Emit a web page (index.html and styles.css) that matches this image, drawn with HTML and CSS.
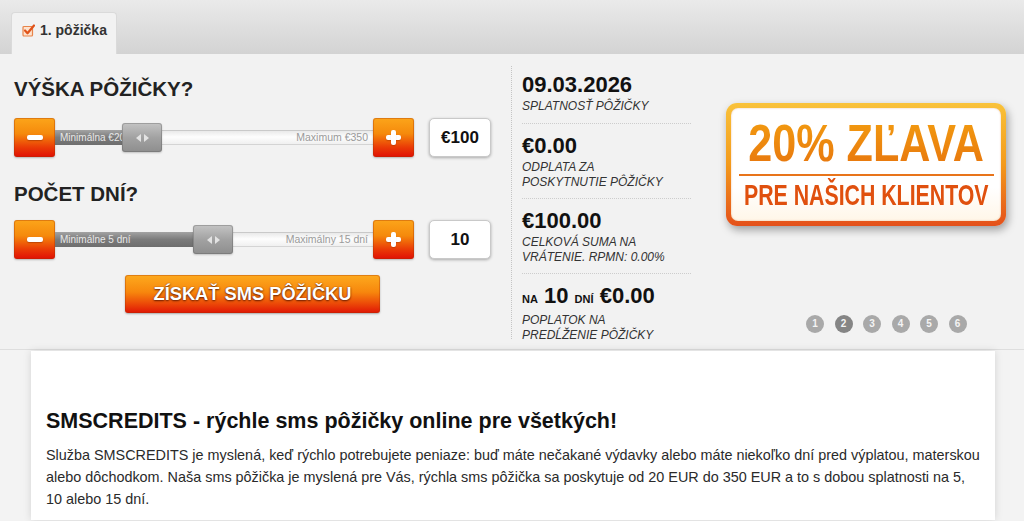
FILE: index.html
```html
<!DOCTYPE html>
<html lang="sk">
<head>
<meta charset="utf-8">
<title>SMSCREDITS</title>
<link rel="stylesheet" href="styles.css">
</head>
<body>
<div class="topbar">
  <div class="tab">
    <svg class="chk" width="13" height="13" viewBox="0 0 13 13"><rect x="1" y="2.5" width="9.5" height="9.5" rx="1" fill="#fde3cf" stroke="#e8844a" stroke-width="1.2"/><path d="M3 6.5 L5.5 9.3 L12 1.5" fill="none" stroke="#e0531a" stroke-width="2.2" stroke-linecap="round" stroke-linejoin="round"/></svg>
    <span>1. pôžička</span>
  </div>
</div>

<div class="panel">
  <div class="calc">
    <h2 class="q">VÝŠKA PÔŽIČKY?</h2>
    <div class="ctrl">
      <div class="sq"><span class="minus"></span></div>
      <div class="track">
        <div class="fill" style="width:90px">Minimálna €20</div>
        <span class="max">Maximum €350</span>
        <div class="thumb" style="left:67px"><i class="al"></i><i class="ar"></i></div>
      </div>
      <div class="sq"><span class="plus"></span></div>
      <div class="val">€100</div>
    </div>
    <h2 class="q q2">POČET DNÍ?</h2>
    <div class="ctrl">
      <div class="sq"><span class="minus"></span></div>
      <div class="track">
        <div class="fill" style="width:160px">Minimálne 5 dní</div>
        <span class="max">Maximálny 15 dní</span>
        <div class="thumb" style="left:138px"><i class="al"></i><i class="ar"></i></div>
      </div>
      <div class="sq"><span class="plus"></span></div>
      <div class="val">10</div>
    </div>
    <div class="cta-wrap"><div class="cta">ZÍSKAŤ SMS PÔŽIČKU</div></div>
  </div>

  <div class="summary">
    <div class="row first">
      <div class="big">09.03.2026</div>
      <div class="small">SPLATNOSŤ PÔŽIČKY</div>
    </div>
    <div class="row">
      <div class="big">€0.00</div>
      <div class="small">ODPLATA ZA<br>POSKYTNUTIE PÔŽIČKY</div>
    </div>
    <div class="row">
      <div class="big">€100.00</div>
      <div class="small">CELKOVÁ SUMA NA<br>VRÁTENIE. RPMN: 0.00%</div>
    </div>
    <div class="row last">
      <div class="big"><span class="tiny">NA</span> 10 <span class="tiny">DNÍ</span> €0.00</div>
      <div class="small">POPLATOK NA<br>PREDĹŽENIE PÔŽIČKY</div>
    </div>
  </div>

  <div class="promo">
    <div class="badge">
      <div class="badge-in">
        <div class="b1"><span>20% ZĽAVA</span></div>
        <div class="bline"></div>
        <div class="b2"><span>PRE NAŠICH KLIENTOV</span></div>
      </div>
    </div>
    <div class="dots">
      <span class="dot">1</span>
      <span class="dot on">2</span>
      <span class="dot">3</span>
      <span class="dot">4</span>
      <span class="dot">5</span>
      <span class="dot">6</span>
    </div>
  </div>
</div>

<div class="lower">
  <div class="card">
    <h1>SMSCREDITS - rýchle sms pôžičky online pre všetkých!</h1>
    <p>Služba SMSCREDITS je myslená, keď rýchlo potrebujete peniaze: buď máte nečakané výdavky alebo máte niekoľko dní pred výplatou, materskou alebo dôchodkom. Naša sms pôžička je myslená pre Vás, rýchla sms pôžička sa poskytuje od 20 EUR do 350 EUR a to s dobou splatnosti na 5, 10 alebo 15 dní.</p>
  </div>
</div>
</body>
</html>
```

FILE: styles.css
```css
* { box-sizing: border-box; }
html, body { margin: 0; padding: 0; }
body {
  font-family: "Liberation Sans", Arial, sans-serif;
  background: #f2f2f2;
  color: #222;
  width: 1024px;
  height: 521px;
  overflow: hidden;
}

/* top tab bar */
.topbar {
  height: 54px;
  background: linear-gradient(#eaeaea, #d3d3d3);
  padding-left: 11px;
  display: flex;
  align-items: flex-end;
}
.tab {
  width: 106px;
  height: 42px;
  background: #f2f2f2;
  border: 1px solid #dadada;
  border-bottom: none;
  border-radius: 4px 4px 0 0;
  padding: 9px 0 0 10px;
  display: flex;
  align-items: flex-start;
  gap: 5px;
  font-size: 14px;
  font-weight: bold;
  color: #333;
}
.tab .chk { margin-top: 2px; }
.tab span { line-height: 17px; }

/* main panel */
.panel {
  height: 296px;
  background: #f2f2f2;
  border-bottom: 1px solid #dedede;
  display: flex;
}
.calc {
  width: 511px;
  padding: 23px 0 0 14px;
}
.q {
  margin: 0 0 17px;
  font-size: 20.5px;
  line-height: 24px;
  font-weight: bold;
  color: #222;
}
.q2 { margin: 25px 0 14px; }
.ctrl {
  width: 477px;
  height: 39px;
  display: flex;
  align-items: center;
}
.sq {
  width: 41px;
  height: 39px;
  border-radius: 3px;
  background: linear-gradient(#fca51a 0%, #f58a0c 40%, #ea3b06 75%, #e01005 100%);
  box-shadow: inset 0 0 0 1px rgba(170, 50, 0, .35), 0 1px 2px rgba(0,0,0,.25);
  position: relative;
  flex: none;
}
.minus {
  position: absolute;
  left: 13px; top: 17px;
  width: 16px; height: 5px;
  border-radius: 2px;
  background: #fff;
  box-shadow: 0 1px 1px rgba(120,30,0,.4);
}
.plus::before, .plus::after {
  content: "";
  position: absolute;
  background: #fff;
  border-radius: 2px;
  box-shadow: 0 1px 1px rgba(120,30,0,.3);
}
.plus::before { left: 13px; top: 17px; width: 15px; height: 5px; }
.plus::after { left: 18px; top: 12px; width: 5px; height: 15px; }

.track {
  width: 318px;
  height: 15px;
  position: relative;
  background: linear-gradient(#e9e9e9, #fdfdfd 45%, #f0f0f0);
  border-top: 1px solid #c9c9c9;
  border-bottom: 1px solid #d4d4d4;
  flex: none;
}
.fill {
  position: absolute;
  left: 0; top: -1px;
  height: 15px;
  background: linear-gradient(#a3a3a3, #7b7b7b 50%, #6e6e6e);
  color: #e8e8e8;
  font-size: 10px;
  line-height: 15px;
  padding-left: 5px;
  white-space: nowrap;
  overflow: hidden;
}
.max {
  position: absolute;
  right: 5px; top: 0;
  font-size: 10.5px;
  line-height: 13px;
  color: #9a9a9a;
}
.thumb {
  position: absolute;
  top: -8px;
  width: 40px;
  height: 29px;
  border-radius: 3px;
  background: linear-gradient(#c4c4c4, #a2a2a2 50%, #8e8e8e);
  box-shadow: inset 0 0 0 1px rgba(90,90,90,.35), 0 1px 2px rgba(0,0,0,.2);
  display: flex;
  justify-content: center;
  align-items: center;
  gap: 3px;
}
.thumb i { width: 0; height: 0; border-top: 4px solid transparent; border-bottom: 4px solid transparent; }
.thumb .al { border-right: 5px solid #e3e3e3; }
.thumb .ar { border-left: 5px solid #e3e3e3; }

.val {
  margin-left: 15px;
  width: 62px;
  height: 39px;
  background: #fff;
  border: 1px solid #c9c9c9;
  border-radius: 5px;
  box-shadow: 0 1px 3px rgba(0,0,0,.3);
  display: flex;
  align-items: center;
  justify-content: center;
  font-size: 17px;
  font-weight: bold;
  color: #111;
}

.cta-wrap {
  width: 477px;
  display: flex;
  justify-content: center;
  margin-top: 16px;
}
.cta {
  width: 255px;
  height: 38px;
  border-radius: 3px;
  background: linear-gradient(#fdaa1e 0%, #f7870d 45%, #ec4a08 75%, #e01505 100%);
  box-shadow: inset 0 0 0 1px rgba(170,50,0,.35), 0 1px 2px rgba(0,0,0,.3);
  color: #fff;
  font-size: 18.3px;
  font-weight: bold;
  text-align: center;
  line-height: 38px;
  text-shadow: 0 1px 2px rgba(90,20,0,.9), 0 0 1px rgba(90,20,0,.7);
}

/* summary column */
.summary {
  width: 180px;
  margin: 12px 0 10px;
  border-left: 1px dotted #c4c4c4;
  padding-left: 10px;
}
.row {
  padding: 10px 0 8px;
  border-bottom: 1px dotted #cdcdcd;
}
.row.first { padding-top: 7px; padding-bottom: 9px; }
.row.last { border-bottom: none; }
.big {
  font-size: 22px;
  line-height: 24px;
  font-weight: bold;
  color: #111;
}
.tiny { font-size: 11px; }
.small {
  margin-top: 2px;
  font-size: 12px;
  line-height: 15px;
  font-style: italic;
  color: #333;
  white-space: nowrap;
}

/* promo column */
.promo {
  flex: 1;
  padding: 49px 0 0 35px;
  display: flex;
  flex-direction: column;
}
.badge {
  width: 280px;
  height: 123px;
  border-radius: 11px;
  padding: 5px;
  background: linear-gradient(#f9c23a, #f39a1b 50%, #e4501a);
  box-shadow: 2px 4px 8px rgba(0,0,0,.35);
}
.badge-in {
  height: 100%;
  border-radius: 7px;
  background: linear-gradient(#ffffff 70%, #fff6e8);
  box-shadow: inset 0 0 2px rgba(200,90,0,.4);
  padding-top: 13px;
  display: flex;
  flex-direction: column;
  align-items: center;
}
.b1, .b2 {
  width: 100%;
  display: flex;
  justify-content: center;
  font-family: "Liberation Sans", sans-serif;
  font-weight: bold;
  white-space: nowrap;
}
.b1 span, .b2 span { display: block; flex: none; }
.b1 {
  font-size: 52px;
  line-height: 44px;
  color: #ef8a0d;
}
.b1 span {
  transform: scaleX(0.83);
  background: linear-gradient(#f29a10, #e8780e);
  -webkit-background-clip: text;
  background-clip: text;
  color: transparent;
}
.bline {
  width: 255px;
  height: 2px;
  background: #e8741a;
  margin: 9px 0 4px;
}
.b2 {
  font-size: 30px;
  line-height: 30px;
  color: #e0500e;
}
.b2 span { transform: scaleX(0.71); }

.dots {
  margin: 89px 0 0 80px;
  display: flex;
  gap: 10.5px;
}
.dot {
  width: 18px;
  height: 18px;
  border-radius: 50%;
  background: #a9a9a9;
  color: #f4f4f4;
  font-size: 10px;
  font-weight: bold;
  line-height: 18px;
  text-align: center;
}
.dot.on { background: #858585; }

/* lower content */
.lower {
  background: #f3f3f3;
  padding: 1px 29px 0 31px;
  height: 170px;
}
.card {
  background: #fff;
  height: 100%;
  box-shadow: 0 0 8px rgba(0,0,0,.13);
  padding: 57px 14px 0 15px;
}
.card h1 {
  margin: 0 0 10px;
  font-size: 21.5px;
  line-height: 26px;
  font-weight: bold;
  color: #111;
}
.card p {
  margin: 0;
  font-size: 14.4px;
  line-height: 22px;
  color: #2a2a2a;
}
```
